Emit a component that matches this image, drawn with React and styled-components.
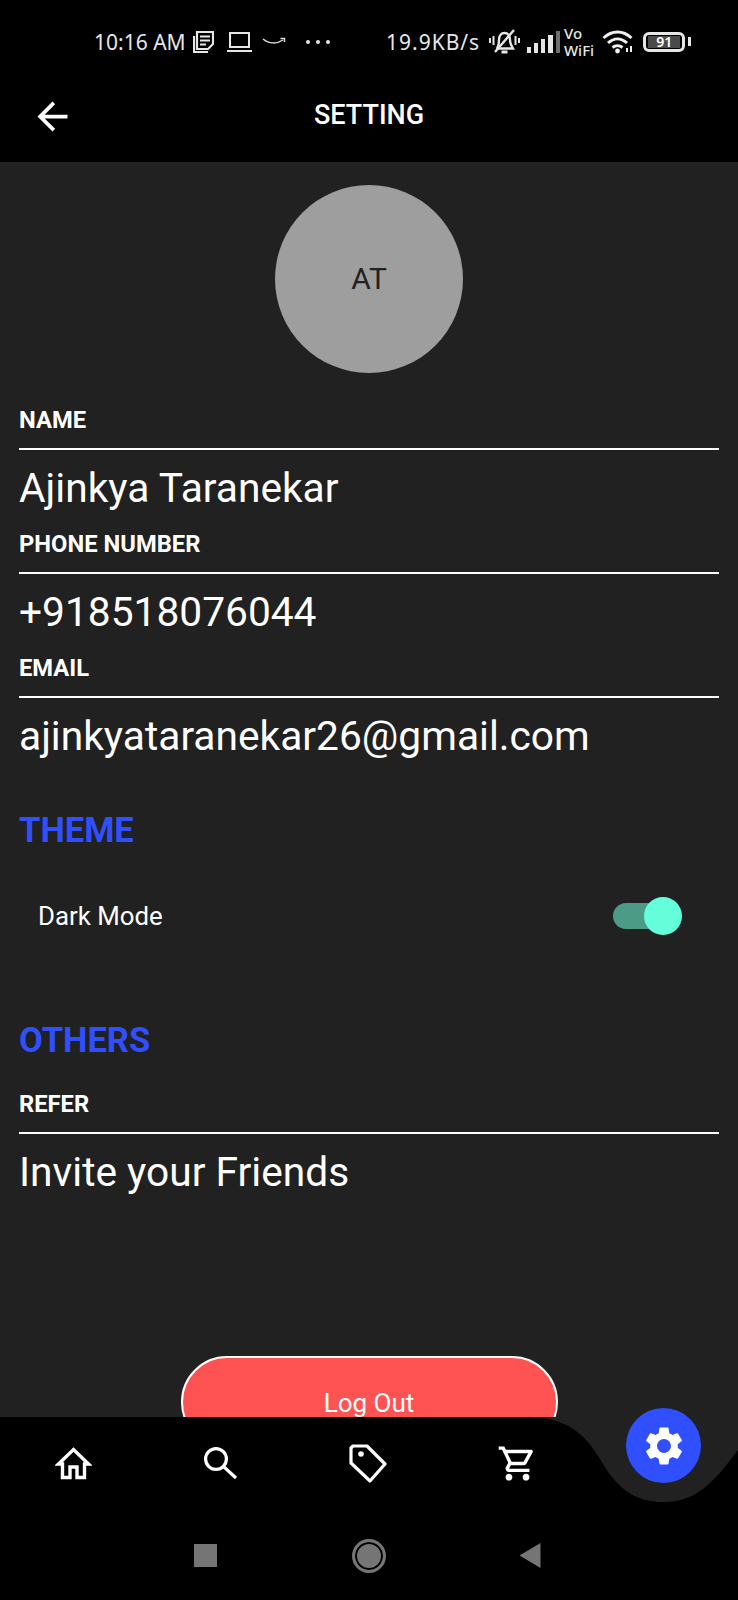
import React from "react";
import styled, { createGlobalStyle } from "styled-components";
import { MdArrowBack, MdOutlineShoppingCart, MdSettings } from "react-icons/md";

const GlobalStyle = createGlobalStyle`
  html, body {
    margin: 0;
    padding: 0;
    background: #212121;
  }
  * {
    box-sizing: border-box;
  }
`;

const fields = [
  { label: "NAME", value: "Ajinkya Taranekar" },
  { label: "PHONE NUMBER", value: "+918518076044" },
  { label: "EMAIL", value: "ajinkyataranekar26@gmail.com" },
];

function NewsIcon() {
  return (
    <svg width="21" height="22" viewBox="0 0 21 22" fill="none" stroke="#e6e6e6" strokeWidth="2.2">
      <path d="M1 5V21H15" />
      <path d="M4 1H20V13L15 18H4Z" />
      <path d="M7 5.5H17M7 9.5H17M7 13.5H13" />
    </svg>
  );
}

function LaptopIcon() {
  return (
    <svg width="25" height="20" viewBox="0 0 25 20" fill="none" stroke="#e6e6e6" strokeWidth="2">
      <rect x="3" y="1" width="19" height="14" />
      <path d="M0 19H25" />
    </svg>
  );
}

function AmazonIcon() {
  return (
    <svg width="24" height="10" viewBox="0 0 24 10" fill="none" stroke="#dcdcdc" strokeWidth="1.5">
      <path d="M1 2C7 7 15 7 21 3" />
      <path d="M18.5 1.5L22.5 1.5L22.5 5" />
    </svg>
  );
}

function BellOffIcon() {
  return (
    <svg width="31" height="26" viewBox="0 0 31 26" fill="none" stroke="#e6e6e6" strokeWidth="2.4">
      <path d="M8.5 18.5C10 16 10 14 10 11C10 7 12 4 15.5 4C19 4 21 7 21 11C21 14 22 16 24 19.5H7" />
      <path d="M12.5 23H18.5" strokeWidth="3" />
      <path d="M6 23L25 1" />
      <path d="M1 9V14M4.5 7V16M26.5 7V16M30 9V14" strokeWidth="2" />
    </svg>
  );
}

function SignalIcon() {
  return (
    <svg width="33" height="22" viewBox="0 0 33 22" fill="#e6e6e6">
      <rect x="0" y="16" width="4" height="6" />
      <rect x="7" y="12" width="4" height="10" />
      <rect x="14" y="8" width="4" height="14" />
      <rect x="21" y="4" width="5" height="18" />
      <rect x="29" y="0" width="4" height="22" fill="#6e6e6e" />
    </svg>
  );
}

function WifiIcon() {
  return (
    <svg width="33" height="24" viewBox="0 0 33 24" fill="none" stroke="#f0f0f0" strokeWidth="3">
      <path d="M1.5 8C10 0 21 0 29.5 8" />
      <path d="M6 13C12 7.5 19 7.5 25 13" />
      <path d="M10.5 17.5C13.5 15 17.5 15 20.5 17.5" />
      <circle cx="15.5" cy="21" r="2.4" fill="#f0f0f0" stroke="none" />
      <path d="M25 22V18M29 22V16" strokeWidth="2" />
    </svg>
  );
}

function HomeIcon() {
  return (
    <svg width="37" height="33" viewBox="0 0 37 33" fill="none" stroke="#fff" strokeWidth="3.4">
      <path d="M3.5 17L18.5 2.5L33.5 17H29.5V30.5H22V20H15V30.5H7.5V17Z" />
    </svg>
  );
}

function SearchIcon() {
  return (
    <svg width="34" height="33" viewBox="0 0 34 33" fill="none" stroke="#fff" strokeWidth="3.2">
      <circle cx="12" cy="12" r="10.4" />
      <path d="M20 20L32 31" />
    </svg>
  );
}

function TagIcon() {
  return (
    <svg width="38" height="39" viewBox="0 0 38 39" fill="none" stroke="#fff" strokeWidth="3.2" strokeLinejoin="round">
      <path d="M4 2H18L36 20L21 37L2 19V4Z" />
      <circle cx="12" cy="10" r="2.8" fill="#fff" stroke="none" />
    </svg>
  );
}

function NavBackground() {
  return (
    <BarShape viewBox="0 0 738 183">
      <path
        d="M0 0H525C555 0 573 8 588 25C600 40 605 52 612 60C625 76 640 85 663 85C695 85 712 68 738 33V183H0Z"
        fill="#000"
      />
    </BarShape>
  );
}

function App() {
  return (
    <>
      <GlobalStyle />
      <Page>
        <StatusBar>
          <Clock>10:16 AM</Clock>
          <NewsIcon />
          <LaptopIcon />
          <AmazonIcon />
          <Dots>
            <i />
            <i />
            <i />
          </Dots>
          <Speed>19.9KB/s</Speed>
          <BellOffIcon />
          <SignalIcon />
          <VoWifi>
            <span>Vo</span>
            <span>WiFi</span>
          </VoWifi>
          <WifiIcon />
          <Battery>
            <BatteryLevel>91</BatteryLevel>
          </Battery>
        </StatusBar>

        <Header>
          <BackButton>
            <MdArrowBack size={45} color="#fff" />
          </BackButton>
          <Title>SETTING</Title>
        </Header>

        <Main>
          <Avatar>AT</Avatar>

          {fields.map((field, idx) => (
            <Field key={idx}>
              <FieldLabel>{field.label}</FieldLabel>
              <FieldValue>{field.value}</FieldValue>
            </Field>
          ))}

          <SectionTitle $top={33}>THEME</SectionTitle>
          <SwitchRow>
            <span>Dark Mode</span>
            <Track>
              <Thumb />
            </Track>
          </SwitchRow>

          <SectionTitle $top={80}>OTHERS</SectionTitle>
          <Field $top={29}>
            <FieldLabel>REFER</FieldLabel>
            <FieldValue>Invite your Friends</FieldValue>
          </Field>

          <LogOut>Log Out</LogOut>
        </Main>

        <BottomBar>
          <NavBackground />
          <Tabs>
            <Tab>
              <HomeIcon />
            </Tab>
            <Tab>
              <SearchIcon />
            </Tab>
            <Tab>
              <TagIcon />
            </Tab>
            <CartTab>
              <MdOutlineShoppingCart size={41} color="#fff" />
            </CartTab>
          </Tabs>
          <SoftKeys>
            <SquareKey />
            <CircleKey />
            <BackKey />
          </SoftKeys>
          <Fab>
            <MdSettings size={46} color="#fff" />
          </Fab>
        </BottomBar>
      </Page>
    </>
  );
}

const Page = styled.div`
  display: flex;
  flex-direction: column;
  width: 738px;
  height: 1600px;
  overflow: hidden;
  background: #212121;
  color: #fff;
  font-family: Roboto, "Liberation Sans", sans-serif;
`;

const StatusBar = styled.div`
  display: flex;
  align-items: center;
  flex-shrink: 0;
  height: 84px;
  padding-left: 94px;
  background: #000;
  color: #e6e6e6;
  font-family: "Noto Sans", sans-serif;
  font-size: 21px;

  > svg:nth-of-type(1) {
    margin-left: 10px;
  }
  > svg:nth-of-type(2) {
    margin-left: 13px;
  }
  > svg:nth-of-type(3) {
    margin-left: 10px;
  }
  > svg:nth-of-type(4) {
    margin-left: 7px;
  }
  > svg:nth-of-type(5) {
    margin-left: 7px;
  }
  > svg:nth-of-type(6) {
    margin-left: 8px;
  }
`;

const Clock = styled.span`
  width: 89px;
  white-space: nowrap;
`;

const Dots = styled.div`
  display: flex;
  gap: 6px;
  margin-left: 20px;

  i {
    width: 4px;
    height: 4px;
    border-radius: 50%;
    background: #e6e6e6;
  }
`;

const Speed = styled.span`
  width: 96px;
  margin-left: 56px;
  white-space: nowrap;
  letter-spacing: 1px;
`;

const VoWifi = styled.div`
  display: flex;
  flex-direction: column;
  margin-left: 4px;
  font-size: 15px;
  line-height: 17px;
  font-weight: 500;
`;

const Battery = styled.div`
  position: relative;
  display: flex;
  align-items: center;
  justify-content: center;
  width: 42px;
  height: 20px;
  margin-left: 8px;
  border: 3px solid #e6e6e6;
  border-radius: 6px;

  &::after {
    content: "";
    position: absolute;
    right: -9px;
    top: 2px;
    width: 3px;
    height: 9px;
    background: #e6e6e6;
  }
`;

const BatteryLevel = styled.div`
  width: 32px;
  height: 12px;
  background: #4a4a4a;
  color: #fff;
  font-size: 14px;
  line-height: 12px;
  font-weight: 600;
  text-align: center;
`;

const Header = styled.div`
  display: grid;
  grid-template-columns: 1fr auto 1fr;
  align-items: center;
  flex-shrink: 0;
  height: 78px;
  padding-bottom: 16px;
  background: #000;
`;

const BackButton = styled.div`
  display: flex;
  margin: 2px 0 0 30px;
`;

const Title = styled.div`
  font-size: 27px;
  font-weight: 500;
`;

const Main = styled.main`
  flex: 1;
  min-height: 0;
  display: flex;
  flex-direction: column;
  padding: 23px 19px 0;
  overflow: hidden;
`;

const Avatar = styled.div`
  display: flex;
  align-items: center;
  justify-content: center;
  flex-shrink: 0;
  align-self: center;
  width: 188px;
  height: 188px;
  margin-bottom: 32px;
  padding-bottom: 2px;
  border-radius: 50%;
  background: #9e9e9e;
  color: #212121;
  font-size: 30px;
`;

const Field = styled.div`
  flex-shrink: 0;
  margin-top: ${(props) => props.$top ?? 0}px;
`;

const FieldLabel = styled.div`
  height: 45px;
  padding-bottom: 13px;
  border-bottom: 2px solid #fff;
  font-size: 23.75px;
  line-height: 30px;
  font-weight: 700;
`;

const FieldValue = styled.div`
  height: 79px;
  padding-top: 10px;
  font-size: 40.7px;
  line-height: 56px;
`;

const SectionTitle = styled.div`
  flex-shrink: 0;
  margin-top: ${(props) => props.$top}px;
  color: #304ffe;
  font-size: 34.5px;
  line-height: 40px;
  font-weight: 700;
`;

const SwitchRow = styled.div`
  display: flex;
  align-items: center;
  justify-content: space-between;
  flex-shrink: 0;
  height: 48px;
  margin-top: 42px;
  padding: 0 37px 0 19px;
  font-size: 25.8px;
`;

const Track = styled.div`
  position: relative;
  width: 60px;
  height: 26px;
  margin-right: 9px;
  border-radius: 13px;
  background: #4c9b87;
`;

const Thumb = styled.div`
  position: absolute;
  top: -6px;
  right: -9px;
  width: 38px;
  height: 38px;
  border-radius: 50%;
  background: #64ffda;
`;

const LogOut = styled.div`
  display: flex;
  align-items: center;
  justify-content: center;
  flex-shrink: 0;
  align-self: center;
  width: 377px;
  height: 92px;
  margin-top: 143px;
  padding-top: 2px;
  border: 2px solid #fff;
  border-radius: 46px;
  background: #ff5252;
  font-size: 26px;
`;

const BottomBar = styled.div`
  position: relative;
  flex-shrink: 0;
  height: 183px;
`;

const BarShape = styled.svg`
  position: absolute;
  inset: 0;
  width: 738px;
  height: 183px;
`;

const Tabs = styled.div`
  position: relative;
  display: grid;
  grid-template-columns: repeat(4, 147px);
  height: 92px;
`;

const Tab = styled.div`
  display: flex;
  align-items: center;
  justify-content: center;
`;

const CartTab = styled(Tab)`
  padding-left: 5px;
`;

const SoftKeys = styled.div`
  position: relative;
  display: grid;
  grid-template-columns: repeat(3, 164px);
  justify-content: center;
  justify-items: center;
  align-items: center;
  height: 91px;
  padding-top: 2px;
`;

const SquareKey = styled.div`
  width: 23px;
  height: 23px;
  background: #757575;
`;

const CircleKey = styled.div`
  width: 34px;
  height: 34px;
  border: 3px solid #757575;
  border-radius: 50%;
  background: #757575;
  box-shadow: inset 0 0 0 2px #000;
`;

const BackKey = styled.div`
  width: 21px;
  height: 25px;
  margin-right: 6px;
  background: #757575;
  clip-path: polygon(100% 0, 100% 100%, 0 50%);
`;

const Fab = styled.div`
  position: absolute;
  top: -9px;
  left: 626px;
  display: flex;
  align-items: center;
  justify-content: center;
  width: 75px;
  height: 75px;
  border-radius: 50%;
  background: #304ffe;
`;

export default App;
